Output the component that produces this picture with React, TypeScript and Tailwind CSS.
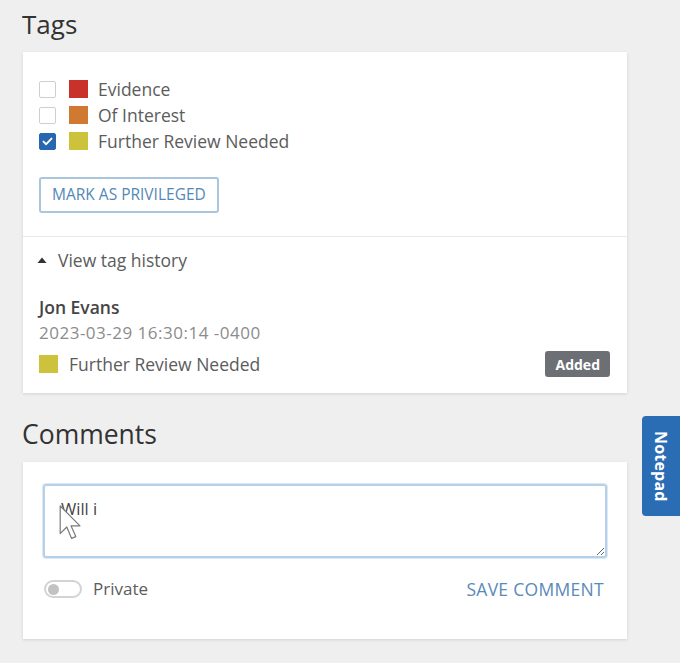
import React, { useState } from 'react';

const tags = [
  { id: 'evidence', name: 'Evidence', color: 'bg-[#c9322a]', checked: false },
  { id: 'interest', name: 'Of Interest', color: 'bg-[#cf7a30]', checked: false },
  { id: 'review', name: 'Further Review Needed', color: 'bg-[#cdc23c]', checked: true },
];

const CheckBox: React.FC<{ checked: boolean; onClick: () => void }> = ({ checked, onClick }) => (
  <button
    onClick={onClick}
    className={
      checked
        ? 'w-[17px] h-[17px] rounded-[2px] bg-[#2767b0] border border-[#2767b0] flex items-center justify-center'
        : 'w-[17px] h-[17px] rounded-[2px] bg-white border border-[#cfcfcf]'
    }
  >
    {checked && (
      <svg width="11" height="9" viewBox="0 0 11 9" fill="none">
        <path d="M1.5 4.6 L4.2 7.2 L9.5 1.6" stroke="white" strokeWidth="1.9" strokeLinecap="round" strokeLinejoin="round" />
      </svg>
    )}
  </button>
);

const App: React.FC = () => {
  const [checked, setChecked] = useState<Record<string, boolean>>(
    Object.fromEntries(tags.map(t => [t.id, t.checked]))
  );
  const [comment, setComment] = useState<string>('Will i');
  const [isPrivate, setIsPrivate] = useState<boolean>(false);

  return (
    <div className="min-h-[663px] bg-[#efefef] pl-[23px] pr-[53px] pt-[7px] font-['Open_Sans',sans-serif] relative">
      <h2 className="text-[26px] leading-[34px] text-[#333] -ml-[1px]">Tags</h2>

      <div className="mt-[11px] bg-white shadow-[0_1px_3px_rgba(0,0,0,0.12)]">
        <div className="px-4 pt-[24px] pb-[23px] border-b border-[#e8e8e8]">
          {tags.map(tag => (
            <div key={tag.id} className="h-[26px] flex items-center">
              <CheckBox
                checked={checked[tag.id]}
                onClick={() => setChecked({ ...checked, [tag.id]: !checked[tag.id] })}
              />
              <span className={`ml-[13px] w-[19px] h-[18px] ${tag.color}`} />
              <span className="ml-[10px] text-[17.5px] text-[#5c5c5c]">{tag.name}</span>
            </div>
          ))}
          <button className="mt-[23px] h-[36px] px-[11px] border-2 border-[#a9c6de] rounded-[3px] text-[15.5px] text-[#5288b8]">
            MARK AS PRIVILEGED
          </button>
        </div>

        <div className="px-4 pt-[11px] pb-[16px]">
          <div className="h-[24px] flex items-center -ml-[2px]">
            <svg width="10" height="7" viewBox="0 0 10 7">
              <path d="M5 0.5 L9.5 6 L0.5 6 Z" fill="#333" />
            </svg>
            <span className="ml-[11px] text-[17.5px] text-[#5c5c5c]">View tag history</span>
          </div>
          <div className="mt-[23px] h-[24px] flex items-center text-[17.5px] font-semibold text-[#444]">Jon Evans</div>
          <div className="mt-[2px] h-[24px] flex items-center text-[17px] tracking-[0.5px] text-[#8c8c8c]">2023-03-29 16:30:14 -0400</div>
          <div className="mt-[6px] h-[26px] flex items-center">
            <span className="w-[19px] h-[18px] bg-[#cdc23c]" />
            <span className="ml-[11px] text-[17.5px] text-[#5c5c5c]">Further Review Needed</span>
            <span className="ml-auto mr-[1px] h-[26px] px-[10px] flex items-center rounded-[3px] bg-[#6c7075] text-white text-[14px] font-bold">
              Added
            </span>
          </div>
        </div>
      </div>

      <h2 className="mt-[24px] text-[26.5px] leading-[34px] text-[#333] -ml-[1px]">Comments</h2>

      <div className="mt-[11px] bg-white shadow-[0_1px_3px_rgba(0,0,0,0.12)] px-[20px] pt-[22px] pb-[37px] relative">
        <textarea
          value={comment}
          onChange={e => setComment(e.target.value)}
          className="block w-full h-[74px] border-2 border-[#b5d1ea] rounded-[3px] px-[16px] pt-[11px] text-[16.5px] text-[#444] font-['Open_Sans',sans-serif] outline-none shadow-[0_0_0_1px_#dbe9f5]"
        />
        <svg className="absolute left-[36px] top-[42px]" width="24" height="40" viewBox="0 0 20 32">
          <path
            d="M1 1 L1 24 L6.5 18.5 L10.5 28 L14 26.5 L10 17.5 L17.5 17.5 Z"
            fill="white"
            stroke="#7a7a7a"
            strokeWidth="1"
            strokeLinejoin="round"
          />
        </svg>
        <div className="mt-[18px] flex items-center">
          <button
            onClick={() => setIsPrivate(!isPrivate)}
            className="ml-[1px] w-[38px] h-[18px] rounded-full border-2 border-[#d3d3d3] bg-white flex items-center px-[2px]"
          >
            <span className="w-[11px] h-[11px] rounded-full bg-[#c2c2c2]" />
          </button>
          <span className="ml-[11px] text-[17px] text-[#5c5c5c]">Private</span>
          <button className="ml-auto mr-[3px] text-[17.5px] tracking-[0.3px] text-[#5a8ab8]">SAVE COMMENT</button>
        </div>
      </div>

      <button className="absolute right-0 top-[416px] w-[38px] h-[100px] rounded-l-[4px] bg-[#2b6db4] flex items-center justify-center">
        <span className="[writing-mode:vertical-rl] text-white font-bold text-[16px] tracking-[0.2px]">Notepad</span>
      </button>
    </div>
  );
};

export default App;
